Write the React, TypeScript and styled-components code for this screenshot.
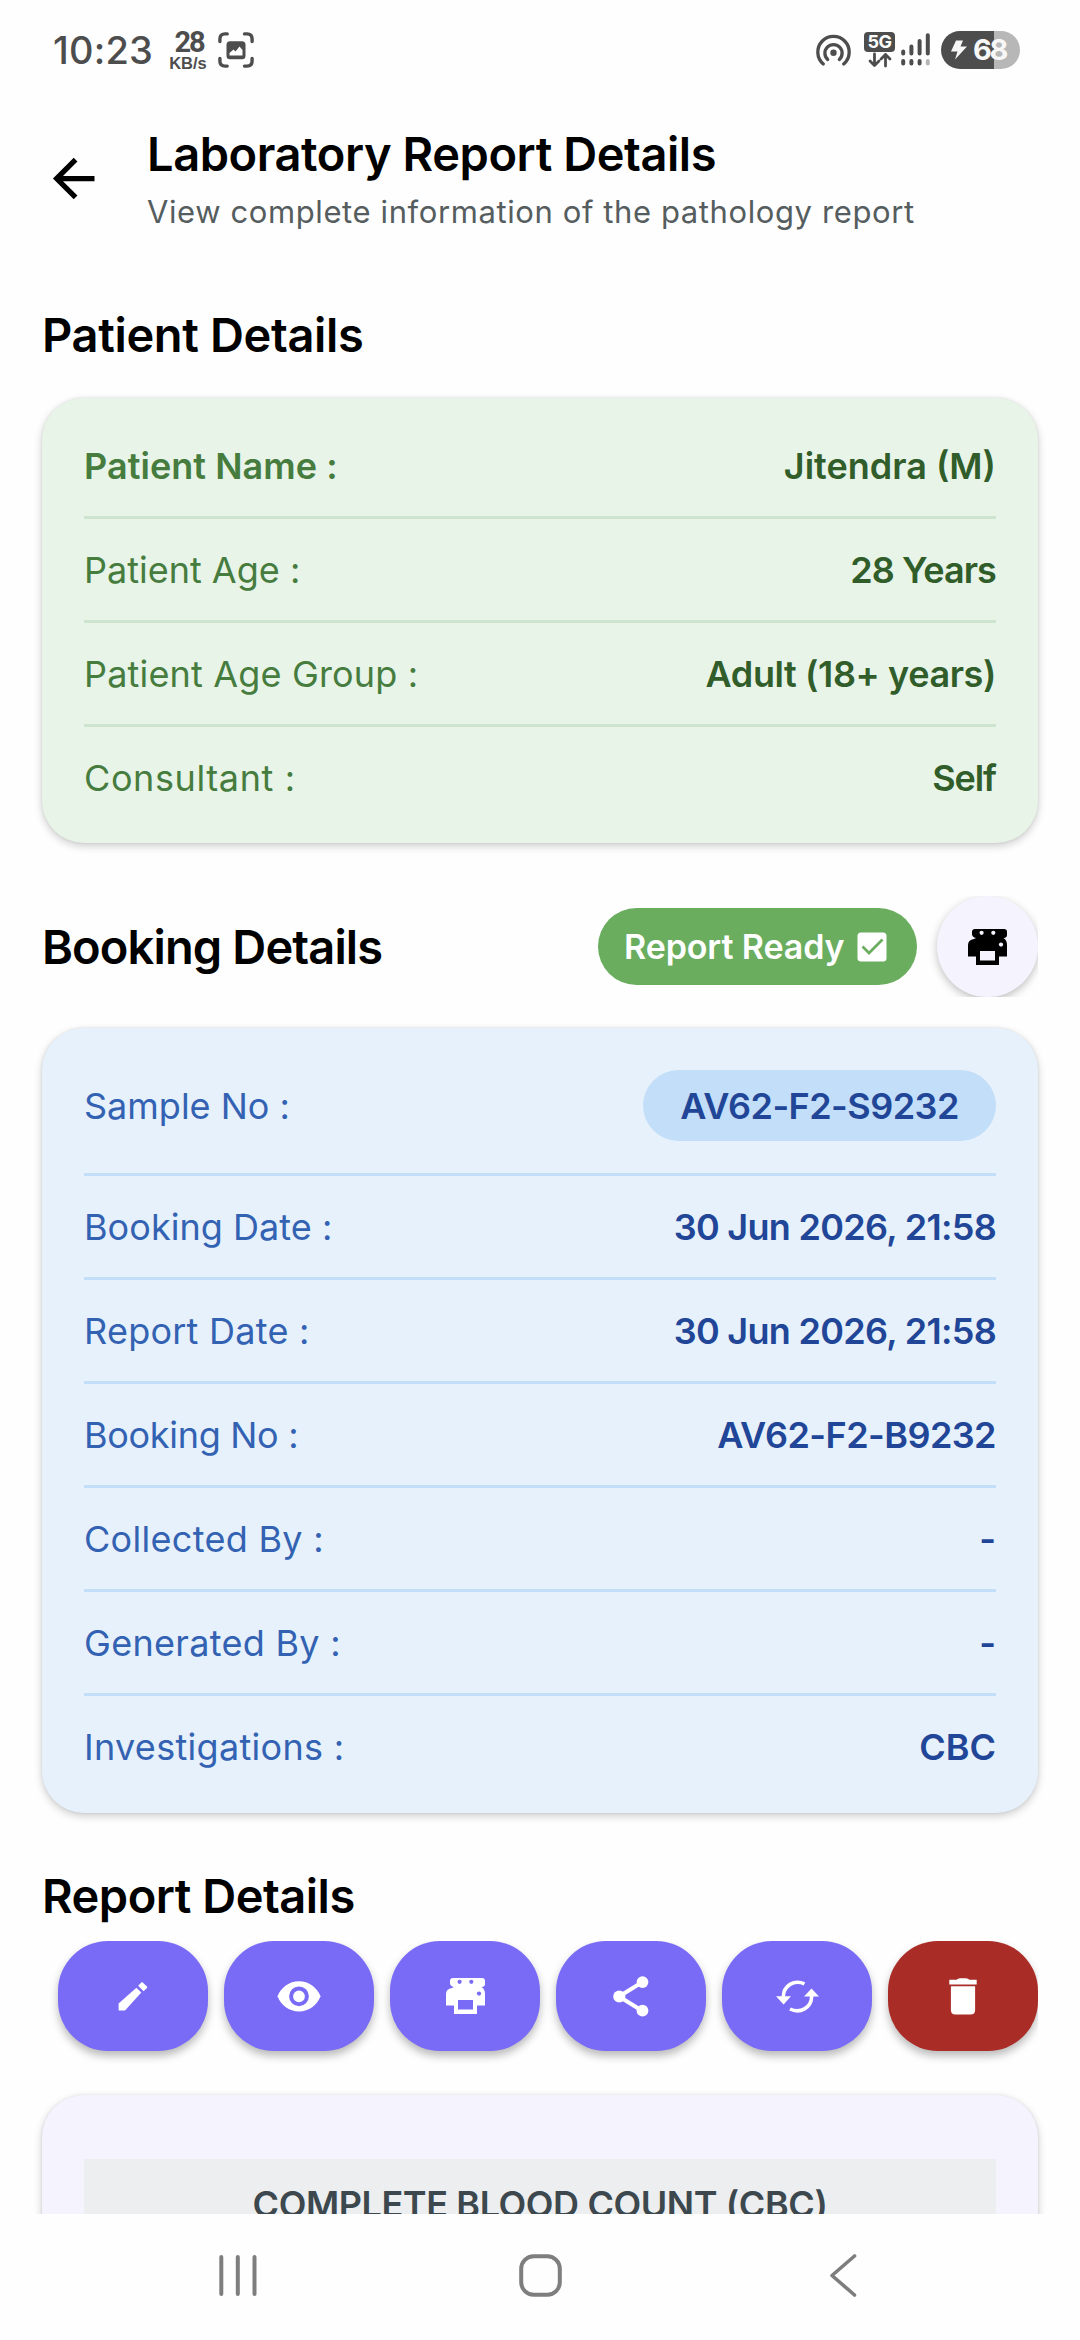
import React from "react";
import styled, { createGlobalStyle } from "styled-components";

const GlobalStyle = createGlobalStyle`
  * { box-sizing: border-box; }
  html, body { margin: 0; padding: 0; background: #fefefe; }
  body { font-family: Inter, "Open Sans", sans-serif; }
  button { border: 0; padding: 0; font: inherit; }
  svg { display: block; flex: none; overflow: visible; }
`;

const Screen = styled.div`
  width: 1080px;
  height: 2340px;
  display: flex;
  flex-direction: column;
  overflow: hidden;
  background: #fefefe;
`;

const StatusBar = styled.header`
  height: 99px;
  flex: none;
  display: flex;
  justify-content: space-between;
  padding: 0 60px 0 53px;
  color: #4d4d4d;
`;

const StatusGroup = styled.div`
  display: flex;
  align-items: center;
`;

const Clock = styled.span`
  width: 116px;
  font-size: 38px;
  font-weight: 500;
  line-height: 56px;
  letter-spacing: 0.2px;
  white-space: nowrap;
`;

const Speed = styled.div`
  width: 38px;
  margin-right: 11px;
  padding-top: 2px;
  display: flex;
  flex-direction: column;
  align-items: center;
  font-weight: 700;
`;

const SpeedValue = styled.span`
  font-family: Roboto, sans-serif;
  font-size: 29px;
  line-height: 24px;
  letter-spacing: -2.2px;
  margin-right: -2px;
`;

const SpeedUnit = styled.span`
  font-family: "Liberation Sans", sans-serif;
  font-size: 16.5px;
  line-height: 18px;
`;

const Network = styled.div`
  width: 31px;
  margin: 0 6px 0 13px;
  display: flex;
  flex-direction: column;
  align-items: center;
  gap: 1px;
`;

const NetworkTag = styled.span`
  width: 31px;
  height: 20px;
  border-radius: 4px;
  background: #4d4d4d;
  color: #fefefe;
  font-size: 18px;
  font-weight: 700;
  line-height: 20px;
  letter-spacing: -0.5px;
  text-align: center;
`;

const Battery = styled.div`
  width: 79px;
  height: 38px;
  margin-left: 10px;
  border-radius: 19px;
  display: flex;
  align-items: center;
  padding-left: 10px;
  gap: 6px;
  color: #f7f7f7;
  background: linear-gradient(90deg, #4d4d4d 53px, #b7b7b7 53px);
`;

const BatteryLevel = styled.span`
  font-size: 29px;
  font-weight: 700;
  line-height: 38px;
  letter-spacing: -2.4px;
`;

const AppBar = styled.header`
  height: 149px;
  flex: none;
  display: flex;
  padding: 26px 42px 0;
`;

const BackButton = styled.button`
  width: 63px;
  height: 63px;
  margin: 22px 42px 0 0;
  background: none;
`;

const Titles = styled.div`
  display: flex;
  flex-direction: column;
`;

const Title = styled.h1`
  margin: 0;
  font-size: 47px;
  font-weight: 600;
  line-height: 58px;
  letter-spacing: -0.44px;
  color: #000;
  white-space: nowrap;
`;

const Subtitle = styled.p`
  margin: 0;
  font-size: 31px;
  line-height: 58px;
  letter-spacing: 0.6px;
  color: #555d5e;
  white-space: nowrap;
`;

const Content = styled.main`
  flex: 1;
  min-height: 0;
  overflow: hidden;
  display: flex;
  flex-direction: column;
  padding: 57px 42px 0;
`;

const Heading = styled.h2<{ $track: number; $top?: number }>`
  margin: ${(p) => p.$top ?? 0}px 0 0;
  flex: none;
  font-size: 47px;
  font-weight: 600;
  line-height: 60px;
  letter-spacing: ${(p) => p.$track}px;
  color: #000;
  white-space: nowrap;
`;

const Card = styled.section<{ $bg: string; $top: number }>`
  flex: none;
  margin-top: ${(p) => p.$top}px;
  padding: 17px 42px 15px;
  border-radius: 42px;
  background: ${(p) => p.$bg};
  box-shadow: 0 3px 8px rgba(0, 0, 0, 0.2), 0 0 3px rgba(0, 0, 0, 0.08);
`;

const BookingCard = styled(Card)`
  padding: 16px 42px;
`;

const Row = styled.div<{ $line: string }>`
  height: 104px;
  display: flex;
  justify-content: space-between;
  align-items: center;
  border-bottom: 3px solid ${(p) => p.$line};
  &:last-child {
    height: 101px;
    border-bottom: 0;
  }
`;

const TallRow = styled(Row)`
  height: 132px;
  padding-bottom: 6px;
`;

const Label = styled.span<{ $color: string; $strong?: boolean; $track: number }>`
  font-size: 36px;
  font-weight: ${(p) => (p.$strong ? 600 : 400)};
  line-height: 50px;
  letter-spacing: ${(p) => p.$track}px;
  color: ${(p) => p.$color};
  white-space: nowrap;
`;

const Value = styled.span<{ $color: string; $track: number }>`
  font-size: 36px;
  font-weight: 600;
  line-height: 50px;
  letter-spacing: ${(p) => p.$track}px;
  color: ${(p) => p.$color};
  white-space: nowrap;
`;

const SampleChip = styled.div`
  width: 353px;
  height: 71px;
  border-radius: 36px;
  display: flex;
  align-items: center;
  justify-content: center;
  background: #c3def8;
`;

const SectionBar = styled.div`
  flex: none;
  height: 101px;
  margin-top: 53px;
  display: flex;
  align-items: center;
  overflow: hidden;
`;

const StatusPill = styled.div`
  width: 319px;
  height: 77px;
  margin-left: auto;
  padding-left: 26px;
  border-radius: 39px;
  display: flex;
  align-items: center;
  gap: 12px;
  background: #6aad5f;
  color: #fff;
`;

const PillText = styled.span`
  width: 221px;
  font-size: 34px;
  font-weight: 600;
  line-height: 48px;
  letter-spacing: -0.1px;
  white-space: nowrap;
`;

const RoundButton = styled.button`
  width: 101px;
  height: 101px;
  margin-left: 20px;
  border-radius: 50%;
  display: flex;
  align-items: center;
  justify-content: center;
  color: #000;
  background: #f5f3fe;
  box-shadow: 0 3px 8px rgba(0, 0, 0, 0.25);
`;

const Actions = styled.div`
  flex: none;
  margin-top: 15px;
  height: 123px;
  display: flex;
  align-items: flex-start;
  justify-content: flex-end;
  gap: 16px;
  overflow: hidden;
`;

const Action = styled.button<{ $danger?: boolean }>`
  width: 150px;
  height: 110px;
  border-radius: 50px;
  display: flex;
  align-items: center;
  justify-content: center;
  color: #fff;
  background: ${(p) => (p.$danger ? "#aa2c26" : "#796bf6")};
  box-shadow: 0 5px 9px rgba(0, 0, 0, 0.27);
`;

const ReportCard = styled(Card)`
  height: 400px;
  padding-top: 64px;
`;

const ReportTitle = styled.h3`
  margin: 0;
  height: 91px;
  font-size: 36px;
  font-weight: 600;
  line-height: 91px;
  letter-spacing: -0.4px;
  text-align: center;
  color: #3c484e;
  background: #edeef0;
`;

const NavBar = styled.nav`
  height: 126px;
  flex: none;
  display: flex;
  align-items: center;
  padding: 0 0 4px 219px;
  gap: 262px;
  background: #fefefe;
`;

const NavBack = styled.div`
  padding-left: 6px;
`;

const PrinterIcon = ({ hole }: { hole: string }) => (
  <svg width="39" height="36" viewBox="0 0 39 36">
    <path
      fill="currentColor"
      d="M7 0H36Q39 0 39 3V6Q39 9 35.500 9Q39 11 39 16V27.500H31V36H8V27.500H0V16Q0 11 6 10L8 9Q4 8 4 5V3Q4 0 7 0Z"
    />
    <rect x="12" y="22" width="15" height="9.500" fill={hole} />
    <circle cx="13.600" cy="3.800" r="2.100" fill={hole} />
    <circle cx="25.300" cy="3.800" r="2.100" fill={hole} />
    <circle cx="33" cy="15.600" r="2.100" fill={hole} />
  </svg>
);

const PencilIcon = () => (
  <svg width="30" height="30" viewBox="0 0 30 30" fill="#fff">
    <path d="M18.400 6.700 23.300 11.600 7 29.500H.600V22.500Z" />
    <path d="M20.200 4.800 23.300 1.400Q24 .700 24.700 1.400L29 5.600Q29.600 6.300 29 7L25.600 10.200Z" />
  </svg>
);

const EyeIcon = () => (
  <svg width="44" height="31" viewBox="0 0 44 31">
    <path fill="#fff" d="M22 .300C12 .300 4 6.500.500 15.300 4 24.200 12 30.500 22 30.500S40 24.200 43.500 15.300C40 6.500 32 .300 22 .300Z" />
    <circle cx="22" cy="15.300" r="7.900" fill="none" stroke="#796bf6" strokeWidth="4" />
  </svg>
);

const ShareIcon = () => (
  <svg width="36" height="41" viewBox="0 0 36 41">
    <path d="M29.500 6 6 20.500 29.500 35" fill="none" stroke="#fff" strokeWidth="4" />
    <g fill="#fff">
      <circle cx="29.500" cy="6.100" r="5.900" />
      <circle cx="6.300" cy="20.500" r="6.100" />
      <circle cx="29.500" cy="34.700" r="5.900" />
    </g>
  </svg>
);

const SyncIcon = () => (
  <svg width="43" height="33" viewBox="0 0 43 33">
    <g fill="none" stroke="#fff" strokeWidth="3.600">
      <path d="M28.500 3.800C18 -.800 7.500 5.500 7.300 17" />
      <path d="M14 29C24 34 35.500 28 35.700 16" />
    </g>
    <path fill="#fff" d="M0 16.300H15L7.600 24.500ZM28 16.500H43L35.500 8.500Z" />
  </svg>
);

const TrashIcon = () => (
  <svg width="28" height="37" viewBox="0 0 28 37" fill="#fff">
    <path d="M.300 1.800H7.500Q9 .200 11 .200H17Q19 .200 20.500 1.800H27.700V6.400H.300Z" />
    <path d="M1.900 8.300H26.100V32Q26.100 36.600 21.500 36.600H6.500Q1.900 36.600 1.900 32Z" />
  </svg>
);

const CheckIcon = () => (
  <svg width="30" height="30" viewBox="0 0 30 30">
    <rect x=".500" y=".500" width="29" height="29" rx="3.500" fill="#fff" />
    <path d="M5.500 14.500 12 21 25.500 7.500" fill="none" stroke="#6aad5f" strokeWidth="2.700" />
  </svg>
);

const BackIcon = () => (
  <svg width="63" height="63" viewBox="0 0 24 24" fill="#000">
    <path d="M20 11v2H8l5.500 5.500-1.420 1.420L4.160 12l7.920-7.920L13.500 5.500 8 11z" />
  </svg>
);

const CaptureIcon = () => (
  <svg width="36" height="36" viewBox="0 0 36 36">
    <path
      fill="none"
      stroke="#4d4d4d"
      strokeWidth="3.400"
      strokeLinecap="round"
      d="M1.900 9.500V7Q1.900 1.900 7 1.900H9.200M26.500 1.900H29Q34.100 1.900 34.100 7V9.500M34.100 26.500V29Q34.100 34.100 29 34.100H26.500M9.200 34.100H7Q1.900 34.100 1.900 29V26.500"
    />
    <rect x="8.500" y="9.300" width="19" height="18" rx="3.500" fill="#4d4d4d" />
    <path d="M11.500 23.500V21L15.500 17.500 17.500 19.500 21.500 14.500 24.500 18V23.500Z" fill="#fefefe" />
  </svg>
);

const HotspotIcon = () => (
  <svg width="35" height="32" viewBox="0 0 35 32">
    <g fill="none" stroke="#4d4d4d" strokeWidth="3.300" strokeLinecap="round">
      <path d="M7.300 30A15.700 15.700 0 1 1 27.700 30" />
      <path d="M11.700 25.500A8.600 8.600 0 1 1 23.300 25.500" />
    </g>
    <circle cx="17.500" cy="18.800" r="3.200" fill="#4d4d4d" />
  </svg>
);

const TransferIcon = () => (
  <svg width="24" height="14" viewBox="0 0 24 14" fill="none" stroke="#4d4d4d" strokeWidth="2.800" strokeLinecap="round" strokeLinejoin="round">
    <path d="M6.500 1V12.500M2 8 6.500 12.500 11 8M17.500 13V1.500M13 6 17.500 1.500 22 6" />
  </svg>
);

const SignalIcon = () => (
  <svg width="30" height="33" viewBox="0 0 30 33" fill="none" stroke="#4d4d4d" strokeWidth="4" strokeLinecap="round">
    <path d="M2.200 18.500V20.500M10.400 13.500V20.500M18.600 8V20.500M26.800 2.300V20.500M2.200 28V30.500M10.400 28V30.500M18.600 28V30.500" />
    <path d="M26.800 28V30.500" stroke="#b7b7b7" />
  </svg>
);

const BoltIcon = () => (
  <svg width="16" height="20" viewBox="0 0 16 20">
    <path d="M5 .500H12L9.500 6.500H16L4 19.500 6.500 11.500H0Z" fill="#f7f7f7" />
  </svg>
);

const RecentsIcon = () => (
  <svg width="38" height="41" viewBox="0 0 38 41" stroke="#7e7e7e" strokeWidth="4" strokeLinecap="round">
    <path d="M2.300 2V39M18.800 2V39M35.500 2V39" />
  </svg>
);

const HomeIcon = () => (
  <svg width="43" height="43" viewBox="0 0 43 43">
    <rect x="2.200" y="2.200" width="38.600" height="38.600" rx="12.500" fill="none" stroke="#7e7e7e" strokeWidth="4" />
  </svg>
);

const NavBackIcon = () => (
  <svg width="27" height="43" viewBox="0 0 27 43">
    <path d="M24.500 2 2 21.500 24.500 41" fill="none" stroke="#7e7e7e" strokeWidth="3.600" strokeLinecap="round" strokeLinejoin="round" />
  </svg>
);

type Field = { label: string; value: string; lt: number; vt: number; strong?: boolean };

const patient: Field[] = [
  { label: "Patient Name :", value: "Jitendra (M)", lt: 0.05, vt: 0, strong: true },
  { label: "Patient Age :", value: "28 Years", lt: 0, vt: -0.9 },
  { label: "Patient Age Group :", value: "Adult (18+ years)", lt: 0.17, vt: -0.4 },
  { label: "Consultant :", value: "Self", lt: 0.6, vt: -1.1 },
];

const booking: Field[] = [
  { label: "Booking Date :", value: "30 Jun 2026, 21:58", lt: 0.05, vt: -0.7 },
  { label: "Report Date :", value: "30 Jun 2026, 21:58", lt: 0.25, vt: -0.7 },
  { label: "Booking No :", value: "AV62-F2-B9232", lt: -0.3, vt: -0.55 },
  { label: "Collected By :", value: "-", lt: 0.3, vt: 0 },
  { label: "Generated By :", value: "-", lt: 0.3, vt: 0 },
  { label: "Investigations :", value: "CBC", lt: 0.3, vt: 0 },
];

const green = { line: "#cfe4cf", label: "#467c3e", value: "#305d2a" };
const blue = { line: "#c3def8", label: "#3362b2", value: "#214697" };

const Fields = ({ items, tone }: { items: Field[]; tone: typeof green }) => (
  <>
    {items.map((f) => (
      <Row key={f.label} $line={tone.line}>
        <Label $color={tone.label} $strong={f.strong} $track={f.lt}>{f.label}</Label>
        <Value $color={tone.value} $track={f.vt}>{f.value}</Value>
      </Row>
    ))}
  </>
);

export default function App() {
  return (
    <Screen>
      <GlobalStyle />
      <StatusBar>
        <StatusGroup>
          <Clock>10:23</Clock>
          <Speed>
            <SpeedValue>28</SpeedValue>
            <SpeedUnit>KB/s</SpeedUnit>
          </Speed>
          <CaptureIcon />
        </StatusGroup>
        <StatusGroup>
          <HotspotIcon />
          <Network>
            <NetworkTag>5G</NetworkTag>
            <TransferIcon />
          </Network>
          <SignalIcon />
          <Battery>
            <BoltIcon />
            <BatteryLevel>68</BatteryLevel>
          </Battery>
        </StatusGroup>
      </StatusBar>
      <AppBar>
        <BackButton><BackIcon /></BackButton>
        <Titles>
          <Title>Laboratory Report Details</Title>
          <Subtitle>View complete information of the pathology report</Subtitle>
        </Titles>
      </AppBar>
      <Content>
        <Heading $track={-0.35}>Patient Details</Heading>
        <Card $bg="#e8f4e8" $top={33}>
          <Fields items={patient} tone={green} />
        </Card>
        <SectionBar>
          <Heading $track={-0.87}>Booking Details</Heading>
          <StatusPill>
            <PillText>Report Ready</PillText>
            <CheckIcon />
          </StatusPill>
          <RoundButton><PrinterIcon hole="#f5f3fe" /></RoundButton>
        </SectionBar>
        <BookingCard $bg="#e6f1fc" $top={31}>
          <TallRow $line={blue.line}>
            <Label $color={blue.label} $track={0}>Sample No :</Label>
            <SampleChip>
              <Value $color={blue.value} $track={-0.55}>AV62-F2-S9232</Value>
            </SampleChip>
          </TallRow>
          <Fields items={booking} tone={blue} />
        </BookingCard>
        <Heading $track={-0.5} $top={53}>Report Details</Heading>
        <Actions>
          <Action><PencilIcon /></Action>
          <Action><EyeIcon /></Action>
          <Action><PrinterIcon hole="#796bf6" /></Action>
          <Action><ShareIcon /></Action>
          <Action><SyncIcon /></Action>
          <Action $danger><TrashIcon /></Action>
        </Actions>
        <ReportCard $bg="#f5f3fe" $top={31}>
          <ReportTitle>COMPLETE BLOOD COUNT (CBC)</ReportTitle>
        </ReportCard>
      </Content>
      <NavBar>
        <RecentsIcon />
        <HomeIcon />
        <NavBack><NavBackIcon /></NavBack>
      </NavBar>
    </Screen>
  );
}
